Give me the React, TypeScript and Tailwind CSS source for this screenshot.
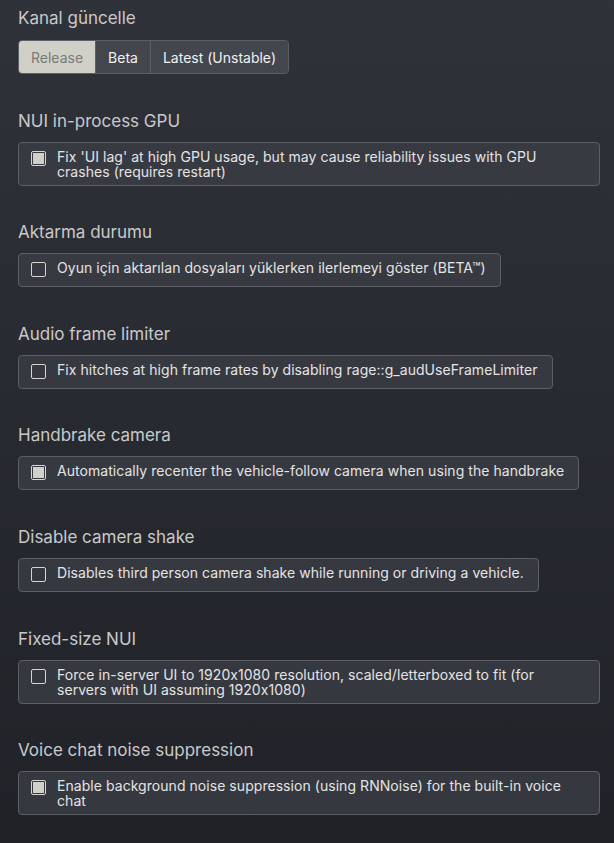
import { useState } from "react";

type Option = { title: string; label: string; checked: boolean };

const options: Option[] = [
  {
    title: "NUI in-process GPU",
    label: "Fix 'UI lag' at high GPU usage, but may cause reliability issues with GPU crashes (requires restart)",
    checked: true,
  },
  {
    title: "Aktarma durumu",
    label: "Oyun için aktarılan dosyaları yüklerken ilerlemeyi göster (BETA™)",
    checked: false,
  },
  {
    title: "Audio frame limiter",
    label: "Fix hitches at high frame rates by disabling rage::g_audUseFrameLimiter",
    checked: false,
  },
  {
    title: "Handbrake camera",
    label: "Automatically recenter the vehicle-follow camera when using the handbrake",
    checked: true,
  },
  {
    title: "Disable camera shake",
    label: "Disables third person camera shake while running or driving a vehicle.",
    checked: false,
  },
  {
    title: "Fixed-size NUI",
    label: "Force in-server UI to 1920x1080 resolution, scaled/letterboxed to fit (for servers with UI assuming 1920x1080)",
    checked: false,
  },
  {
    title: "Voice chat noise suppression",
    label: "Enable background noise suppression (using RNNoise) for the built-in voice chat",
    checked: true,
  },
];

const channels = ["Release", "Beta", "Latest (Unstable)"];

function Heading({ children }: { children: React.ReactNode }) {
  return <h2 className="text-[17px] leading-[24px] text-[#c9c9c9] font-normal">{children}</h2>;
}

function CheckOption({ opt }: { opt: Option }) {
  const [on, setOn] = useState(opt.checked);
  return (
    <label
      onClick={() => setOn(!on)}
      className="mt-[9px] flex w-fit max-w-full cursor-pointer items-start rounded-[4px] border border-[#5d5f66] bg-[#3b3d45]/80 pl-[12px] pr-[14px]"
    >
      <span className="mt-[8px] mb-[9px] flex h-[15px] w-[15px] shrink-0 items-center justify-center rounded-[2px] border border-[#d6d6ce]">
        {on && <span className="h-[11px] w-[11px] bg-[#d0d0c8]" />}
      </span>
      <span className="ml-[11px] py-[6px] text-[14px] leading-[15px] tracking-[0.05px] text-[#e4e4e4]">{opt.label}</span>
    </label>
  );
}

export default function App() {
  const [channel, setChannel] = useState("Release");

  return (
    <div
      className="min-h-screen bg-gradient-to-b from-[#30323a] to-[#202228] pl-[18px] pr-[14px] pt-[6px] pb-[20px] [font-feature-settings:'calt'_0]"
      style={{ fontFamily: "Inter, 'Noto Sans', sans-serif" }}
    >
      <section>
        <Heading>Kanal güncelle</Heading>
        <div className="mt-[10px] flex w-fit overflow-hidden rounded-[4px] border border-[#5d5f66]">
          {channels.map((c, i) => (
            <button
              key={c}
              onClick={() => setChannel(c)}
              className={`h-[32px] px-[12px] text-[14px] ${i > 0 ? "border-l border-[#5d5f66]" : ""} ${
                channel === c ? "bg-[#d0d0c8] text-[#7a7a78]" : "bg-[#44464e] text-[#f0f0f0]"
              }`}
            >
              {c}
            </button>
          ))}
        </div>
      </section>

      {options.map((opt) => (
        <section key={opt.title} className="mt-[34.6px]">
          <Heading>{opt.title}</Heading>
          <CheckOption opt={opt} />
        </section>
      ))}
    </div>
  );
}
